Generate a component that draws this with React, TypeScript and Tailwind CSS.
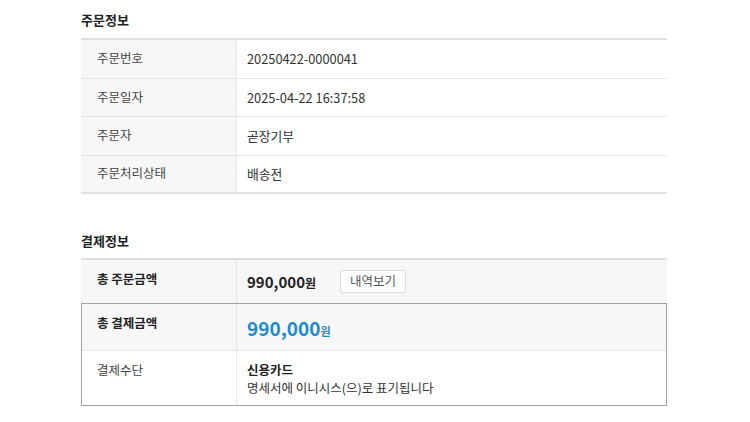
import React from "react";

const font = { fontFamily: '"Noto Sans CJK KR", "Noto Sans", sans-serif' };

function InfoRow({ label, value, last }: { label: string; value: string; last?: boolean }) {
  return (
    <div className={`flex h-[38.5px] ${last ? "border-b-2 border-[#e2e2e2]" : "border-b border-[#e6e6e6]"}`}>
      <div className="w-[156px] shrink-0 bg-[#f8f7f7] border-r border-[#e6e6e6] pl-[16px] flex items-center text-[12.5px] text-[#444]">
        {label}
      </div>
      <div className="flex-1 pl-[10px] flex items-center text-[12.8px] text-[#333]">{value}</div>
    </div>
  );
}

export default function App() {
  return (
    <div style={font} className="w-[750px] h-[422px] bg-white overflow-hidden">
      <div className="ml-[81px] w-[586px]">
        <div className="h-[38px] flex items-center text-[13px] font-bold text-[#222] pt-[2px]">주문정보</div>
        <div className="border-t-2 border-[#dedede]">
          <InfoRow label="주문번호" value="20250422-0000041" />
          <InfoRow label="주문일자" value="2025-04-22 16:37:58" />
          <InfoRow label="주문자" value="곧장기부" />
          <InfoRow label="주문처리상태" value="배송전" last />
        </div>

        <div className="h-[64px] flex items-end pb-[8px] text-[13px] font-bold text-[#222]">결제정보</div>
        <div className="border-t-2 border-[#dedede]">
          <div className="flex h-[43px] bg-[#f8f7f7]">
            <div className="w-[156px] shrink-0 border-r border-[#e6e6e6] pl-[16px] pt-[10px] text-[12.5px] font-bold text-[#222]">
              총 주문금액
            </div>
            <div className="flex-1 pl-[10px] flex items-center">
              <span className="text-[15px] font-bold text-[#222] leading-none">
                990,000<span className="text-[12px]">원</span>
              </span>
              <button className="ml-[24px] h-[23px] px-[9px] bg-white border border-[#dcdcdc] rounded-[2px] text-[12.5px] text-[#555]">
                내역보기
              </button>
            </div>
          </div>
          <div className="border border-[#a3a3a3]">
            <div className="flex h-[47px] bg-[#f8f7f7] border-b border-[#e6e6e6]">
              <div className="w-[155px] shrink-0 border-r border-[#e6e6e6] pl-[15px] pt-[10px] text-[12.5px] font-bold text-[#222]">
                총 결제금액
              </div>
              <div className="flex-1 pl-[10px] pt-[13px]">
                <span className="text-[19px] font-bold text-[#1a8ad2] leading-none">
                  990,000<span className="text-[11px]">원</span>
                </span>
              </div>
            </div>
            <div className="flex h-[54px] bg-white">
              <div className="w-[155px] shrink-0 border-r border-[#e6e6e6] pl-[15px] pt-[10px] text-[12.5px] text-[#444]">
                결제수단
              </div>
              <div className="flex-1 pl-[10px] pt-[10px] text-[12.5px] text-[#333] leading-[18px]">
                <div className="font-bold text-[#222]">신용카드</div>
                <div>명세서에 이니시스(으)로 표기됩니다</div>
              </div>
            </div>
          </div>
        </div>
      </div>
    </div>
  );
}
